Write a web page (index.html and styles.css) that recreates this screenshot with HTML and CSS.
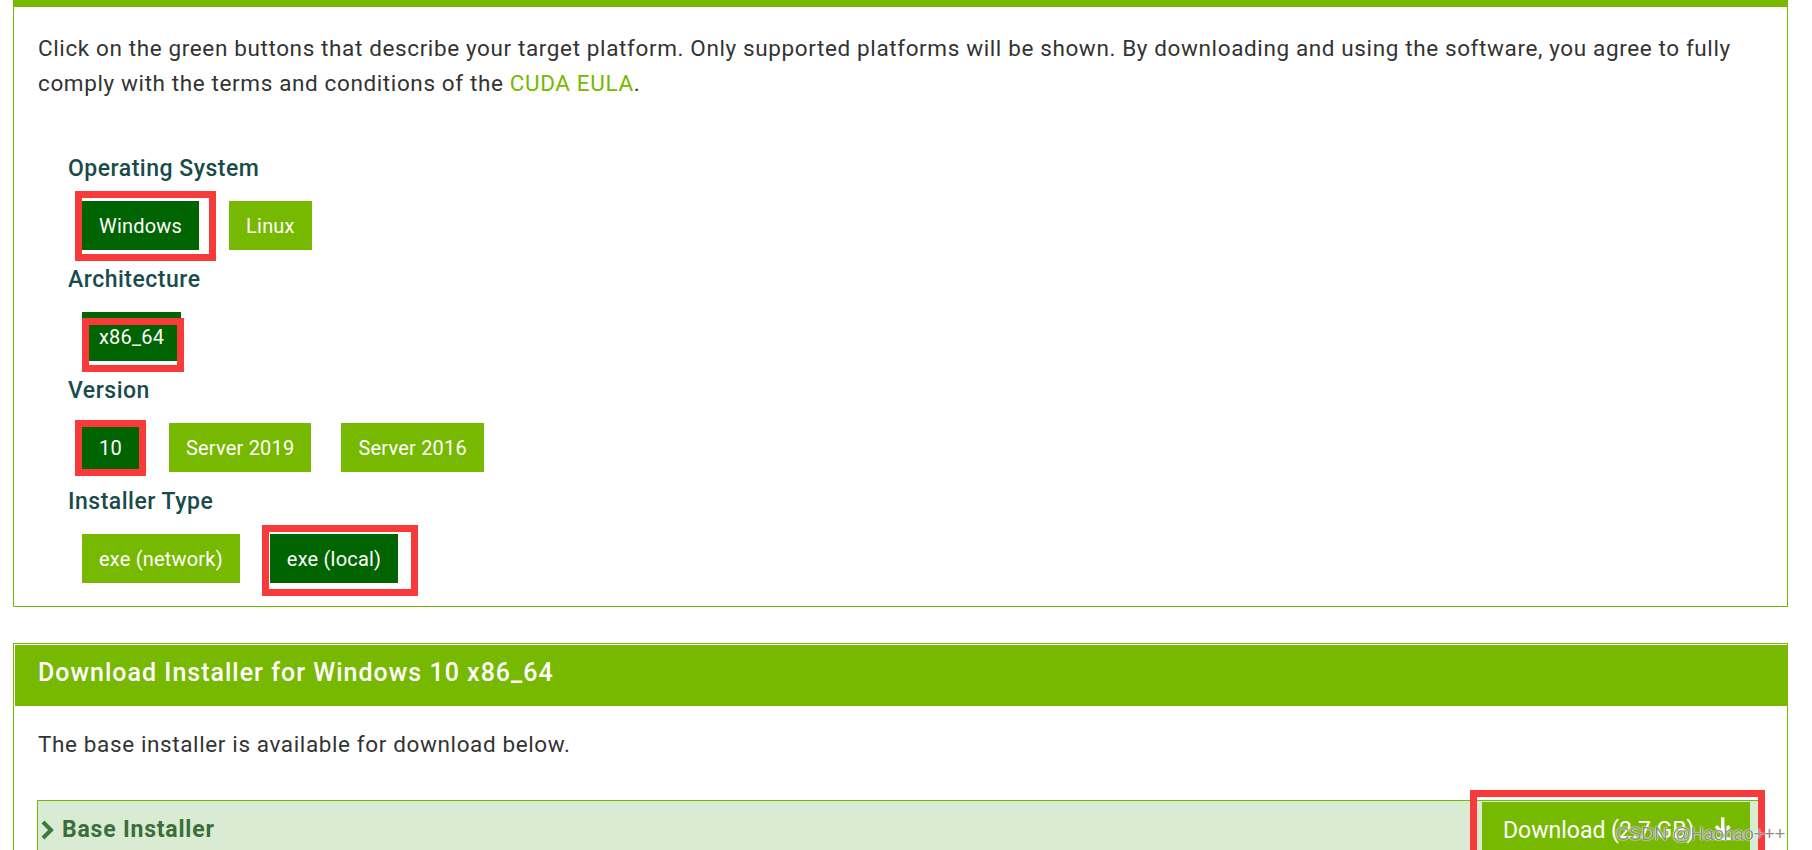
FILE: index.html
```html
<!DOCTYPE html>
<html lang="en">
<head>
<meta charset="utf-8">
<title>CUDA Toolkit Downloads</title>
<link rel="stylesheet" href="styles.css">
</head>
<body>
<div class="page">
  <section class="panel">
    <p class="intro">Click on the green buttons that describe your target platform. Only supported platforms will be shown. By downloading and using the software, you agree to fully comply with the terms and conditions of the <a class="eula" href="#">CUDA EULA</a>.</p>
    <div class="options">
      <div class="group">
        <div class="label">Operating System</div>
        <div class="btn-row">
          <span class="btn sel">Windows<i class="mark mark-os"></i></span>
          <span class="btn">Linux</span>
        </div>
      </div>
      <div class="group">
        <div class="label">Architecture</div>
        <div class="btn-row">
          <span class="btn sel">x86_64<i class="mark mark-arch"></i></span>
        </div>
      </div>
      <div class="group">
        <div class="label">Version</div>
        <div class="btn-row">
          <span class="btn sel">10<i class="mark mark-ver"></i></span>
          <span class="btn">Server 2019</span>
          <span class="btn">Server 2016</span>
        </div>
      </div>
      <div class="group">
        <div class="label">Installer Type</div>
        <div class="btn-row">
          <span class="btn">exe (network)</span>
          <span class="btn sel">exe (local)<i class="mark mark-type"></i></span>
        </div>
      </div>
    </div>
  </section>

  <section class="panel2">
    <div class="panel2-head">Download Installer for Windows 10 x86_64</div>
    <p class="note">The base installer is available for download below.</p>
    <div class="inst-row">
      <div class="inst-title">
        <svg class="chev" width="14" height="20" viewBox="0 0 14 20"><path d="M3 2 L11 10 L3 18" fill="none" stroke="#3c7a3c" stroke-width="4"/></svg>
        <span>Base Installer</span>
      </div>
      <a class="dl-btn" href="#">
        <span>Download (2.7 GB)</span>
        <svg class="dl-icon" width="20" height="26" viewBox="0 0 20 26"><path d="M10 1 V15" stroke="#fff" stroke-width="3.5"/><path d="M3 10 L10 17 L17 10" fill="none" stroke="#fff" stroke-width="3.5"/><path d="M2 23 H18" stroke="#fff" stroke-width="3"/></svg>
        <i class="mark mark-dl"></i>
      </a>
    </div>
  </section>
</div>
<div class="watermark">CSDN @Haohao+++</div>
</body>
</html>
```

FILE: styles.css
```css
html, body {
  margin: 0;
  padding: 0;
  background: #fff;
}
body {
  font-family: Roboto, "Liberation Sans", Arial, sans-serif;
  color: #333;
  width: 1812px;
  height: 850px;
  overflow: hidden;
  position: relative;
}
.page {
  padding: 0 24px 0 13px;
}
.panel {
  border: 1px solid #76b900;
  border-top: 7px solid #76b900;
  padding: 24px 24px 8px 24px;
}
.intro {
  margin: 0;
  font-size: 22.5px;
  line-height: 35px;
  letter-spacing: 0.62px;
  color: #333;
}
.eula {
  color: #76b900;
  text-decoration: none;
}
.options {
  margin-top: 53px;
  padding-left: 30px;
}
.label {
  font-size: 23px;
  font-weight: 500;
  line-height: 30px;
  letter-spacing: 0.5px;
  color: #184b4b;
}
.btn-row {
  display: flex;
  gap: 30px;
  margin: 17px 0 15px 14px;
}
.btn {
  position: relative;
  display: flex;
  align-items: center;
  height: 49px;
  padding: 0 17px;
  background: #76b900;
  color: #fff;
  font-size: 20px;
  letter-spacing: 0.2px;
}
.btn.sel {
  background: #006400;
}
.mark {
  position: absolute;
  box-sizing: border-box;
  border: 7px solid #f93a3a;
  pointer-events: none;
}
.mark-os { left: -7px; top: -10px; width: 141px; height: 70px; }
.mark-arch { left: 0; top: 6px; width: 102px; height: 54px; }
.mark-ver { left: -7px; top: -3px; width: 71px; height: 56px; }
.mark-type { left: -8px; top: -9px; width: 156px; height: 71px; }

.panel2 {
  margin-top: 36px;
  border: 1px solid #76b900;
  padding: 1px 0 0 1px;
}
.panel2-head {
  background: #76b900;
  color: #fff;
  font-size: 25px;
  font-weight: 500;
  line-height: 55px;
  letter-spacing: 1px;
  padding: 0 0 6px 23px;
}
.note {
  margin: 21px 0 0 23px;
  font-size: 22.5px;
  line-height: 35px;
  letter-spacing: 0.62px;
  color: #333;
}
.inst-row {
  margin: 38px 22px 0 22px;
  border: 1px solid #76b900;
  background: #d9ebd2;
  display: flex;
  justify-content: space-between;
  align-items: flex-start;
  height: 80px;
}
.inst-title {
  display: flex;
  align-items: center;
  gap: 8px;
  padding: 15px 0 0 2px;
  font-size: 23px;
  font-weight: 700;
  line-height: 27px;
  letter-spacing: 0.8px;
  color: #3c6e3c;
}
.chev {
  display: block;
}
.dl-btn {
  position: relative;
  display: flex;
  align-items: flex-start;
  gap: 18px;
  box-sizing: border-box;
  width: 268px;
  margin: 1px 14px 0 0;
  padding: 15px 18px 0 21px;
  height: 70px;
  background: #76b900;
  color: #fff;
  font-size: 23px;
  line-height: 27px;
  letter-spacing: 0;
  text-decoration: none;
  white-space: nowrap;
}
.dl-icon {
  display: block;
  margin-top: -1px;
}
.mark-dl { left: -12px; top: -12px; width: 295px; height: 70px; }
.watermark {
  position: absolute;
  left: 1616px;
  top: 823px;
  font-family: "Liberation Sans", Arial, sans-serif;
  font-size: 18.5px;
  line-height: 22px;
  letter-spacing: -0.3px;
  color: rgba(125, 125, 125, 0.9);
  text-shadow: 0 0 2px #fff, 0 0 1px #fff;
  white-space: nowrap;
}
```
